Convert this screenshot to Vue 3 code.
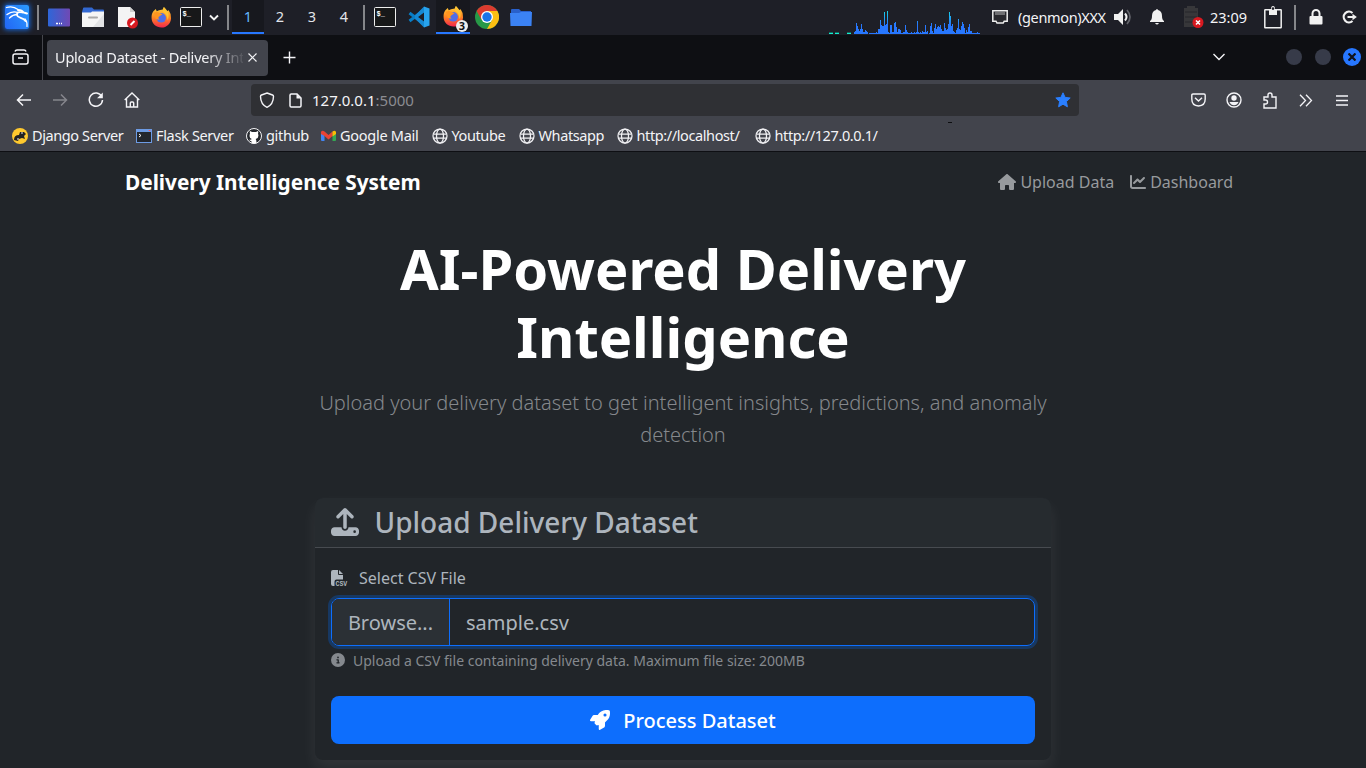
<script setup>
const workspaces = ['1', '2', '3', '4']
const globes = [
  { name: 'Youtube', w: 87 },
  { name: 'Whatsapp', w: 98 },
  { name: 'http://localhost/', w: 138 },
  { name: 'http://127.0.0.1/', w: 130 }
]
// Heights of the CPU monitor's bars, in pixels
const cpu = [2,3,11,8,5,3,5,10,5,2,2,4,3,2,0,1,1,1,1,1,1,1,2,1,5,5,14,9,8,8,22,9,10,23,2,1,9,9,2,2,11,12,7,2,5,5,4,1,1,2,2,9,4,2,1,1,1,2,1,1,2,1,2,13,2,1,2,1,3,2,2,9,2,3,0,1,8,11,3,1,6,10,5,7,8,7,9,5,3,3,11,6,4,5,10,22,18,8,10,3,2,1,4,6,15,5,4,8,12,10,6,1,4,2,7,10,3,3,1,1,1,1,1,2,1,1]
</script>

<template>
  <div class="screen">
    <svg class="defs" width="0" height="0">
      <defs>
        <linearGradient id="flame" x1="0" y1="0" x2="0" y2="1"><stop offset="0" stop-color="#ffd43b"/><stop offset=".5" stop-color="#ff8a22"/><stop offset="1" stop-color="#f4264c"/></linearGradient>
        <linearGradient id="desk" x1="0" y1="0" x2="1" y2="0"><stop offset="0" stop-color="#2e66d8"/><stop offset="1" stop-color="#7049b4"/></linearGradient>
        <linearGradient id="cpufill" gradientUnits="userSpaceOnUse" x1="0" y1="0" x2="0" y2="23"><stop offset="0" stop-color="#17d4e6"/><stop offset=".6" stop-color="#2777ff"/></linearGradient>
        <symbol id="firefox" viewBox="0 0 22 22">
          <path fill="url(#flame)" d="M2.5 5 5 2.5 6 5q3-2 6-1.500L13.500.5q2 2 3 4.500l2-1q3 4 2.500 8.500C20.500 18 16.500 22 11 22S.7 18 .6 12C.5 9 1 7 2.500 5z"/>
          <circle cx="10.700" cy="11.800" r="5" fill="#506ee8"/>
          <path fill="#ff961f" d="M3 6.500q3-1.500 5.500 0l3.500 1.500-3 2.200q-2.500 1.500 0 3.800L5 13z"/>
          <path fill="#ffc331" d="M13.500.5c4 4 6.500 7 4 14-1-5.500-2-7-5-9z"/>
        </symbol>
        <symbol id="term" viewBox="0 0 22 20">
          <rect x=".5" y=".5" width="21" height="19" rx="1" fill="#171819" stroke="#eee"/>
          <text x="2.500" y="9" font-family="Liberation Mono, monospace" font-size="7" font-weight="bold" fill="#fff">$_</text>
        </symbol>
        <symbol id="globe" viewBox="0 0 16 16"><g fill="none" stroke="#f1f1f4" stroke-width="1.250"><circle cx="8" cy="8" r="7"/><ellipse cx="8" cy="8" rx="3.500" ry="7"/><path d="M1.500 6h13M1.500 10h13"/></g></symbol>
      </defs>
    </svg>

    <header class="taskbar">
      <div class="slot kali"><div class="kali-box"><svg width="24" height="24" viewBox="0 0 24 24" fill="none" stroke="#fff" stroke-linecap="round"><path stroke-width="1.300" d="M1.500 2.500Q8 .5 13 4.500M2 9.500Q7 5.500 13 7.500M4.500 13Q8 9.500 12 9.500"/><path stroke-width="2" d="M13 5q4 0 5.500 2.500l3.500 1"/><path stroke-width="1.800" d="M17.500 7.500Q11.500 6 12 10c.500 3.500 6.500 2 8.500 6"/><path stroke-width="1.200" d="M20 14q2.500 3 2 7.500"/></svg></div></div>
      <div class="slot rule rule-8"></div>
      <div class="slot w34"><svg width="22" height="19" viewBox="0 0 22 19"><rect y=".5" width="22" height="18" rx="1" fill="url(#desk)"/><path d="M8 15.500h2m1 0h1m1 0h1" stroke="#fff" stroke-width="1.400"/></svg></div>
      <div class="slot w34"><svg width="22" height="21" viewBox="0 0 22 21"><path d="M1 1.500Q1 .5 2 .5h8l2 2h9q1 0 1 1V9H0V5z" fill="#3268d2"/><path d="M0 5.500h9l1-1h12V20H0z" fill="#f5f5f5"/><path d="M22 7v13H11z" fill="#e2e3e5"/><path d="M7 10.500h8" stroke="#aaa" stroke-width="2" stroke-linecap="round"/></svg></div>
      <div class="slot w35"><svg width="22" height="23" viewBox="0 0 22 23"><path d="M1 1h12l5 5v15H1z" fill="#f4f4f4"/><path d="M13 1v5h5" fill="#cfcfcf"/><circle cx="15.500" cy="17" r="5.500" fill="#d71920"/><path d="M13.500 19l4-4" stroke="#fff" stroke-width="2"/></svg></div>
      <div class="slot w33"><svg width="21" height="22"><use href="#firefox"/></svg></div>
      <div class="slot w26"><svg width="22" height="20"><use href="#term"/></svg></div>
      <div class="slot w20"><svg width="10" height="7" viewBox="0 0 10 7" fill="none" stroke="#f2f2f2" stroke-width="1.900"><path d="M1 1.500l4 4 4-4"/></svg></div>
      <div class="slot rule rule-8"></div>
      <div v-for="(n, i) in workspaces" :key="n" class="slot workspace" :class="{ active: i === 0 }">{{ n }}</div>
      <div class="slot rule rule-8"></div>
      <div class="slot w34"><svg width="22" height="20"><use href="#term"/></svg></div>
      <div class="slot w34"><svg width="22" height="22" viewBox="0 0 22 22"><path d="M16 4L1.500 15M16 18L1.500 7" fill="none" stroke="#087dc6" stroke-width="3"/><path d="M16 .5l5.500 2v17L16 21.500z" fill="#27a3ee"/><path d="M16 .5v6L10 11l6 4.500v6L7 12.500v-3z" fill="#1689d4"/></svg></div>
      <div class="slot w34 running"><svg width="21" height="22"><use href="#firefox"/></svg><span class="count">3</span></div>
      <div class="slot w34"><svg width="24" height="24" viewBox="0 0 24 24"><circle cx="12" cy="12" r="12" fill="#279847"/><path d="M17 15l-5 9A12 12 0 0 0 22.400 6H12z" fill="#fdbf12"/><path d="M12 6h10.400A12 12 0 0 0 1.600 6l5 9z" fill="#dc3b2f"/><circle cx="12" cy="12" r="6" fill="#fff"/><circle cx="12" cy="12" r="4.700" fill="#1a73e8"/></svg></div>
      <div class="slot w34"><svg width="22" height="17" viewBox="0 0 22 17"><path d="M1 1q0-1 1-1h7l2 2h10v5H1z" fill="#2960cb"/><path d="M0 4h9l2-1h11l-.5 14H.5z" fill="#3b82f4"/></svg></div>
      <div class="grow"></div>
      <svg class="graph" width="153" height="23" viewBox="0 0 153 23"><path d="M0 21.500h4m2 0h4m8 0h4" stroke="#14665f" stroke-width="1"/><path d="M0 22.500h4m2 0h4m8 0h4" stroke="#13f0cf"/><rect v-for="(h, i) in cpu" :key="i" :x="25 + i" :y="23 - h" width="1" :height="h" fill="url(#cpufill)"/></svg>
      <div class="slot eth"><svg width="16" height="14" viewBox="0 0 16 14"><path d="M.8.800h14.400v10.400h-3l-1 1.800H5l-1-1.800H.8z" fill="#29292e" stroke="#eee" stroke-width="1.500"/><path d="M4 2v3m2-3v3m2-3v3m2-3v3m2-3v3" stroke="#ddd" stroke-width=".8"/></svg></div>
      <span class="genmon">(genmon)XXX</span>
      <div class="slot vol"><svg width="18" height="16" viewBox="0 0 18 16"><path d="M0 5h4l5-5v16l-5-5H0z" fill="#f1f1f1"/><path d="M11 4.500q3 3.500 0 7" stroke="#f1f1f1" stroke-width="2" fill="none"/><path d="M13 1q6 7 0 14" stroke="#62636a" stroke-width="1.700" fill="none"/></svg></div>
      <div class="slot bell"><svg width="14" height="16" viewBox="0 0 14 16" fill="#f1f1f1"><path d="M6 1q1-2 2 0 4 1 4 6 0 4 2 5v1H0v-1q2-1 2-5 0-5 4-6zM5 14h4q-2 3-4 0z"/></svg></div>
      <div class="slot battery"><svg width="21" height="22" viewBox="0 0 21 22"><path d="M4 0h8v2h3v19H1V2h3z" fill="#37373a"/><path d="M2 6h12M2 11h12M2 16h12" stroke="#26262a"/><circle cx="15" cy="16.500" r="5.500" fill="#d71920"/><path d="M13 14.500l4 4m0-4l-4 4" stroke="#fff" stroke-width="1.500"/></svg></div>
      <span class="clock">23:09</span>
      <div class="slot clip"><svg width="18" height="23" viewBox="0 0 18 23"><rect x=".8" y="3.800" width="16.400" height="18" rx=".5" fill="none" stroke="#f0f0f0" stroke-width="1.500"/><path d="M5 3h2q0-3 2-3t2 3h2v6H5z" fill="#f0f0f0"/><circle cx="9" cy="2.600" r="1.300" fill="#20212a"/></svg></div>
      <div class="slot rule"></div>
      <div class="slot lock"><svg width="14" height="16" viewBox="0 0 14 16"><rect x=".5" y="7" width="13" height="8.500" rx="1" fill="#f1f1f1"/><path d="M3.500 8V4.500a3.500 3.500 0 0 1 7 0V8" stroke="#f1f1f1" stroke-width="2" fill="none"/></svg></div>
      <div class="slot logout"><svg width="15" height="14" viewBox="0 0 15 14" fill="none" stroke="#f1f1f1" stroke-width="2.200"><path d="M10.500 3A5.300 5.300 0 1 0 10.500 11M5.500 7H11"/><path d="M10.500 3.800L14.800 7l-4.300 3.200z" fill="#f1f1f1" stroke="none"/></svg></div>
    </header>

    <div class="tabs">
      <div class="view"><svg width="17" height="16" viewBox="0 0 17 16" fill="none" stroke="#f4f4f7" stroke-width="1.500"><rect x="1" y="5" width="15" height="10" rx="2"/><path d="M3 2.500Q3.500 1 5 1h7q1.500 0 2 1.500M6 9h5"/></svg></div>
      <div class="tab"><span class="tab-title">Upload Dataset - Delivery Inte</span><svg width="9" height="9" viewBox="0 0 9 9" stroke="#f4f4f7" stroke-width="1.200"><path d="M.5.500l8 8m0-8l-8 8"/></svg></div>
      <svg class="plus" width="13" height="13" viewBox="0 0 13 13" stroke="#f4f4f7" stroke-width="1.400"><path d="M6.500.5v12m-6-6h12"/></svg>
      <div class="grow"></div>
      <svg class="list" width="12" height="8" viewBox="0 0 12 8" fill="none" stroke="#f4f4f7" stroke-width="1.400"><path d="M.5 1L6 6.500 11.500 1"/></svg>
      <i class="ball"></i><i class="ball"></i>
      <i class="ball close"><svg width="8" height="8" viewBox="0 0 8 8" stroke="#11131b" stroke-width="2.200"><path d="M.5.500l7 7m0-7l-7 7"/></svg></i>
    </div>

    <div class="chrome">
      <div class="toolbar">
        <div class="tool"><svg width="16" height="14" viewBox="0 0 16 14" fill="none" stroke="#f4f4f7" stroke-width="1.500"><path d="M15 7H1.500m5.500-5.500L1.500 7 7 12.500"/></svg></div>
        <div class="tool"><svg width="16" height="14" viewBox="0 0 16 14" fill="none" stroke="#85868c" stroke-width="1.500"><path d="M1 7h13.500M9 1.500L14.500 7 9 12.500"/></svg></div>
        <div class="tool"><svg width="16" height="16" viewBox="0 0 16 16" fill="none" stroke="#f4f4f7" stroke-width="1.500"><path d="M13.700 4.500A6.600 6.600 0 1 0 14.500 8"/><path d="M14.800.5v5.700H9.100z" fill="#f4f4f7" stroke="none"/></svg></div>
        <div class="tool"><svg width="16" height="16" viewBox="0 0 16 16" fill="none" stroke="#f4f4f7" stroke-width="1.400"><path d="M.7 8L8 1l7.300 7M2.500 6.500V15h11V6.500M6.300 15v-4q0-1 1-1h1.400q1 0 1 1v4"/></svg></div>
        <div class="urlbar">
          <svg width="16" height="16" viewBox="0 0 16 16" fill="none" stroke="#f4f4f7" stroke-width="1.400"><path d="M8 1l5.500 2q1 .4 1 1.500Q14.300 12.500 8 15.300 1.700 12.500 1.500 4.500q0-1.100 1-1.500z"/></svg>
          <svg class="page-icon" width="13" height="15" viewBox="0 0 13 15"><path d="M1 2.200Q1 1 2.200 1H8l4 4v7.800q0 1.200-1.200 1.200H2.200Q1 14 1 12.800z" fill="none" stroke="#f4f4f7" stroke-width="1.500"/><path d="M7.500 1v4.500H12z" fill="#f4f4f7"/></svg>
          <span class="url">127.0.0.1<b>:5000</b></span>
          <svg class="star" width="16" height="16" viewBox="0 0 16 16" fill="#2a7fff"><path stroke="#2a7fff" stroke-linejoin="round" d="M8 .8l2.100 4.600 5.100.600-3.800 3.500 1 5.300L8 12.200l-4.400 2.600 1-5.300L.8 6l5.100-.6z"/></svg>
          <i class="speck"></i>
        </div>
        <div class="grow"></div>
        <div class="tool"><svg width="15" height="14" viewBox="0 0 15 14" fill="none" stroke="#f4f4f7" stroke-width="1.400"><path d="M2 1h11q1.200 0 1.200 1.200V6q0 6.700-6.700 7Q.8 12.700.8 6V2.200Q.8 1 2 1zM4 4.800l3.500 3.300L11 4.800"/></svg></div>
        <div class="tool"><svg width="16" height="16" viewBox="0 0 16 16"><circle cx="8" cy="8" r="7" fill="none" stroke="#f4f4f7" stroke-width="1.400"/><circle cx="8" cy="6" r="2.700" fill="#f4f4f7"/><path d="M3.500 10h9Q11 13.200 8 13.200T3.500 10z" fill="#f4f4f7"/></svg></div>
        <div class="tool"><svg width="14" height="17" viewBox="0 0 14 17" fill="none" stroke="#f4f4f7" stroke-width="1.400"><path d="M1 16V12h1.500q2 0 2-2t-2-2H1V5h4V3q0-2 2-2t2 2v2h4v11z"/></svg></div>
        <div class="tool"><svg width="14" height="13" viewBox="0 0 14 13" fill="none" stroke="#f4f4f7" stroke-width="1.300"><path d="M1 .7l5.500 5.800L1 12.300M7 .7l5.500 5.800L7 12.300"/></svg></div>
        <div class="tool"><svg width="12" height="11" viewBox="0 0 12 11" stroke="#f4f4f7" stroke-width="1.300"><path d="M0 1h12M0 5.500h12M0 10h12"/></svg></div>
      </div>
      <nav class="bookmarks">
        <a class="bm django"><svg width="16" height="16" viewBox="0 0 16 16"><circle cx="8" cy="8" r="8" fill="#ffc92e"/><path d="M2 12q0-5 5-5l1-3h4l2 2-2 2 1 3-3-1-3 1-1 2z" fill="#222"/><path d="M9 5h2m-6 6h2" stroke="#eee"/></svg><span>Django Server</span></a>
        <a class="bm flask"><svg width="16" height="14" viewBox="0 0 16 14"><rect width="16" height="14" fill="#6d9be4"/><rect x="1" y="3" width="14" height="10" fill="#23262c"/><path d="M3 5l2 1.500L3 8" stroke="#fff" fill="none"/><path d="M13.500 1v1" stroke="#f55" stroke-width="1.500"/></svg><span>Flask Server</span></a>
        <a class="bm github"><svg width="16" height="16" viewBox="0 0 16 16"><circle cx="8" cy="8" r="7.500" fill="#25282d" stroke="#f4f4f7"/><path fill="#fff" d="M4 3l2 1h4l2-1q.500 1.500 0 2.500Q13.500 10 9.700 11q.8.800.8 4.200-2.500.8-5 0v-2Q4 13 3 11.500q2 .7 2.800-.5Q2.500 10 4 5.500 3.500 4.500 4 3z"/></svg><span>github</span></a>
        <a class="bm gmail"><svg width="15" height="12" viewBox="0 0 15 12"><path d="M0 2h3.500v9H1q-1 0-1-1z" fill="#4285f4"/><path d="M11.500 2H15v8q0 1-1 1h-2.500z" fill="#34a853"/><path d="M0 2q1-2 3.500-.5l4 3.500 4-3.500V6l-4 3.500L3.500 6 0 4z" fill="#ea4335"/><path d="M11.500 1.500Q14 0 15 2v2l-3.500 2.500z" fill="#fbbc04"/></svg><span>Google Mail</span></a>
        <a v-for="b in globes" :key="b.name" class="bm" :style="{ width: b.w + 'px' }"><svg width="16" height="16"><use href="#globe"/></svg><span>{{ b.name }}</span></a>
      </nav>
    </div>

    <main class="page">
      <div class="navbar">
        <a class="brand">Delivery Intelligence System</a>
        <div class="links">
          <a><svg width="18" height="16" viewBox="0 0 576 512" fill="currentColor"><path d="M575.800 255.500c0 18-15 32.100-32 32.100h-32l.7 160.200c0 2.700-.2 5.400-.5 8.100V472c0 22.100-17.900 40-40 40H392c-22.100 0-40-17.900-40-40v-88c0-17.700-14.300-32-32-32h-64c-17.700 0-32 14.300-32 32v88c0 22.100-17.900 40-40 40h-80c-22.100 0-40-17.900-40-40V287.600H32c-18 0-32-14-32-32.100 0-9 3-17 10-24L266.400 8c7-7 15-8 22-8s15 2 21 7l255.400 224.500c8 7 12 15 11 24z"/></svg> Upload Data</a>
          <a><svg width="16" height="16" viewBox="0 0 512 512" fill="currentColor"><path d="M64 64c0-17.700-14.300-32-32-32S0 46.300 0 64v336c0 44.200 35.800 80 80 80h400c17.700 0 32-14.300 32-32s-14.300-32-32-32H80c-8.800 0-16-7.200-16-16V64zm406.600 86.600c12.500-12.500 12.500-32.800 0-45.300s-32.800-12.500-45.300 0L320 210.700l-57.400-57.400c-12.500-12.500-32.800-12.500-45.300 0l-112 112c-12.500 12.500-12.500 32.800 0 45.300s32.800 12.500 45.300 0L240 221.300l57.400 57.400c12.500 12.500 32.800 12.500 45.300 0l128-128z"/></svg> Dashboard</a>
        </div>
      </div>
      <section class="content">
        <h1>AI-Powered Delivery Intelligence</h1>
        <p class="lead">Upload your delivery dataset to get intelligent insights, predictions, and anomaly detection</p>
        <div class="card">
          <div class="card-header"><svg width="28" height="28" viewBox="0 0 512 512" fill="currentColor"><path d="M288 109.300V352c0 17.700-14.300 32-32 32s-32-14.300-32-32V109.300l-73.400 73.400c-12.500 12.500-32.800 12.500-45.300 0s-12.500-32.800 0-45.300l128-128c12.500-12.500 32.800-12.500 45.300 0l128 128c12.500 12.500 12.500 32.800 0 45.300s-32.800 12.500-45.300 0L288 109.300zM64 352H192c0 35.300 28.700 64 64 64s64-28.700 64-64H448c35.300 0 64 28.700 64 64v32c0 35.300-28.700 64-64 64H64c-35.300 0-64-28.700-64-64V416c0-35.300 28.700-64 64-64zM432 456a24 24 0 1 0 0-48 24 24 0 1 0 0 48z"/></svg><span>Upload Delivery Dataset</span></div>
          <div class="card-body">
            <div class="label"><svg class="csv" width="17" height="16" viewBox="0 0 17 16" fill="currentColor"><path d="M0 2Q0 0 2 0h5v4q0 1 1 1h4v4.500H5.500q-2 0-2 2V16H2q-2 0-2-2zM8 0l4 4H8z"/><text x="4.600" y="15.900" font-size="6.500" font-weight="bold" font-family="Liberation Mono, monospace" textLength="11.600">CSV</text></svg><span>Select CSV File</span></div>
            <div class="file"><span class="browse">Browse...</span><span class="name">sample.csv</span></div>
            <div class="help"><svg width="14" height="14" viewBox="0 0 512 512" fill="currentColor"><path d="M256 512A256 256 0 1 0 256 0a256 256 0 1 0 0 512zM216 336h24v-64h-24c-13.300 0-24-10.700-24-24s10.700-24 24-24h48c13.300 0 24 10.700 24 24v88h8c13.300 0 24 10.700 24 24s-10.700 24-24 24h-80c-13.300 0-24-10.700-24-24s10.700-24 24-24zm40-208a32 32 0 1 1 0 64 32 32 0 1 1 0-64z"/></svg><span>Upload a CSV file containing delivery data. Maximum file size: 200MB</span></div>
            <button class="submit"><svg width="20" height="20" viewBox="0 0 512 512" fill="currentColor"><path d="M156.600 384.900L125.700 354c-8.500-8.500-11.500-20.800-7.700-32.200 3-8.900 7-20.500 11.800-33.800H24c-8.600 0-16.600-4.600-20.900-12.100s-4.200-16.700.2-24.100l52.500-88.500c13-21.900 36.500-35.300 61.900-35.300H200c2.400-4 4.800-7.700 7.200-11.300C289.100-4.100 411.100-8.100 483.900 5.300c11.600 2.100 20.600 11.200 22.800 22.800 13.400 72.900 9.300 194.800-111.400 276.700-3.500 2.400-7.300 4.800-11.300 7.200v82.300c0 25.400-13.400 49-35.300 61.900l-88.500 52.500c-7.400 4.400-16.600 4.500-24.100.2S224 496.700 224 488V380.800c-14.100 4.900-26.400 8.900-35.700 11.900-11.200 3.600-23.400.5-31.800-7.800zM384 168a40 40 0 1 0 0-80 40 40 0 1 0 0 80z"/></svg><span>Process Dataset</span></button>
          </div>
        </div>
      </section>
    </main>
  </div>
</template>

<style>
body { margin: 0; background: #212529; overflow: hidden; }
</style>

<style scoped>
* { box-sizing: border-box; }
.screen { width: 1366px; height: 768px; overflow: hidden; display: flex; flex-direction: column; font-family: "Noto Sans", sans-serif; color: #f4f4f7; background: #212529; }
.defs { position: absolute; }
svg { display: block; flex: none; }
.grow { flex: 1; }
.taskbar { height: 35px; padding-bottom: 1px; flex: none; display: flex; align-items: center; background: #1e1f27; font-size: 14.500px; line-height: 20px; }
.slot { height: 34px; flex: none; display: flex; align-items: center; justify-content: center; position: relative; }
.kali { width: 34px; }
.kali-box { width: 24px; height: 24px; background: linear-gradient(60deg, #2266f5, #2b9bff); border-radius: 2px; box-shadow: 0 0 5px 1px #1765d5; }
.rule { width: 9px; }
.rule::before { content: ""; width: 2px; height: 25px; background: #85868a; }
.rule-8 { width: 8px; }
.w20 { width: 20px; } .w26 { width: 26px; } .w33 { width: 33px; } .w34 { width: 34px; } .w35 { width: 35px; }
.workspace { width: 32px; border-bottom: 2px solid transparent; color: #e2e5ea; }
.workspace.active { background: #17181e; border-color: #2777ff; color: #65b8ff; }
.running { background: #17181e; border-bottom: 2px solid #2777ff; }
.count { position: absolute; left: 20px; top: 20px; width: 12px; height: 12px; border-radius: 50%; background: #eee; color: #111; font-size: 11px; font-weight: 700; line-height: 12px; text-align: center; }
.graph { align-self: flex-end; }
.eth { width: 36px; }
.genmon { width: 90px; padding-bottom: 1px; white-space: nowrap; letter-spacing: -.35px; }
.vol { width: 29px; } .bell { width: 39px; } .battery { width: 33px; margin-left: 1px; }
.clock { width: 46px; padding-bottom: 1px; }
.clip { width: 34px; }
.lock { width: 33px; } .logout { width: 34px; }
.tabs { height: 45px; flex: none; display: flex; align-items: center; background: #0e0f13; padding-right: 5px; }
.view { width: 43px; height: 45px; border-right: 1px solid #45464c; display: flex; align-items: center; padding: 0 0 1px 12px; }
.tab { width: 221px; height: 36px; margin-left: 4px; border-radius: 4px; background: #42444c; display: flex; align-items: center; padding: 0 0 1px 8px; }
.tab-title { width: 188px; margin-right: 5px; white-space: nowrap; font-size: 14.500px; letter-spacing: -.22px; -webkit-mask-image: linear-gradient(90deg, #000 150px, transparent 192px); mask-image: linear-gradient(90deg, #000 150px, transparent 192px); }
.plus { margin-left: 15px; }
.list { margin-right: 61px; margin-bottom: 1px; }
.ball { width: 16px; height: 16px; border-radius: 50%; background: #373b49; margin: 0 13px 1px 0; }
.ball.close { width: 18px; height: 18px; background: #2777ff; margin: 0 0 1px -1px; display: flex; align-items: center; justify-content: center; }
.chrome { height: 72px; flex: none; background: #42444c; border-bottom: 1px solid #0e0f13; }
.toolbar { height: 40px; display: flex; align-items: center; padding: 0 6px; }
.tool { width: 36px; display: flex; justify-content: center; }
.urlbar { position: relative; width: 828px; height: 32px; margin-left: 101px; background: #2f3034; border-radius: 4px; display: flex; align-items: center; padding: 0 8px; font-size: 15px; }
.page-icon { margin-left: 14px; }
.url { margin-left: 10px; flex: 1; } .url b { font-weight: 400; color: #8b8c91; }
.speck { position: absolute; left: 697px; top: 38px; width: 4px; height: 1px; background: #0d0e10; }
.bookmarks { height: 31px; display: flex; align-items: center; padding-left: 12px; font-size: 14.500px; letter-spacing: -.4px; }
.bm { display: flex; align-items: center; gap: 4px; white-space: nowrap; flex: none; }
.bm span { padding-bottom: 2px; }
.django { width: 124px; } .flask { width: 110px; letter-spacing: -.33px; } .github { width: 75px; letter-spacing: -.3px; } .gmail { width: 110.500px; letter-spacing: -.27px; }
.page { flex: 1; background: #212529; }
.navbar { width: 1116px; height: 60px; margin: 0 auto; display: flex; align-items: center; justify-content: space-between; }
.brand { font-size: 20.800px; font-weight: 700; color: #fff; margin-bottom: 1px; }
.links { display: flex; padding-right: 8px; gap: 16px; color: #979a9d; font-size: 16px; }
.links a { display: flex; align-items: center; gap: 4px; }
.content { width: 736px; margin: 22px auto 0; text-align: center; }
h1 { margin: 0; font-size: 56px; line-height: 68px; font-weight: 700; color: #fff; }
.lead { margin: 17px 0 47px; font-size: 20px; line-height: 32px; font-weight: 300; color: #85888c; }
.card { height: 262px; text-align: left; border-radius: 8px; background: #212529; box-shadow: 0 8px 16px rgba(255,255,255,.075); color: #adb5bd; overflow: hidden; }
.card-header { height: 50px; display: flex; align-items: center; gap: 15.500px; padding: 0 16px 1px; font-size: 28px; font-weight: 500; background: #262b2f; border-bottom: 1px solid #474b50; }
.card-body { padding: 18px 16px; }
.label { height: 24px; display: flex; align-items: center; gap: 11px; font-size: 16px; margin-bottom: 8px; }
.csv { overflow: visible; }
.file { height: 48px; border: 1px solid #0d6efd; border-radius: 8px; box-shadow: 0 0 0 3px #173862; display: flex; overflow: hidden; font-size: 20px; }
.browse { width: 118px; display: flex; align-items: center; justify-content: center; border-right: 1px solid #0d6efd; background: #2b3035; }
.name { display: flex; align-items: center; padding-left: 16px; }
.help { height: 22px; margin-top: 3px; display: flex; align-items: center; gap: 8px; font-size: 14px; color: #85898e; }
.submit { width: 100%; height: 48px; margin-top: 25px; border: 0; border-radius: 8px; background: #0d6efd; color: #fff; font: 500 20px "Noto Sans", sans-serif; display: flex; align-items: center; justify-content: center; gap: 13px; }
</style>
